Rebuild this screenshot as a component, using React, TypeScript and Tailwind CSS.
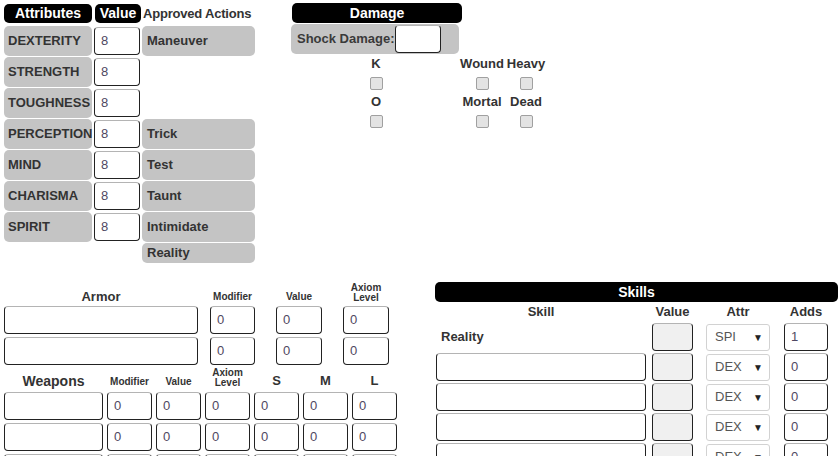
import React from "react";

const attributes = [
    {name: "DEXTERITY", action: "Maneuver"},
    {name: "STRENGTH", action: ""},
    {name: "TOUGHNESS", action: ""},
    {name: "PERCEPTION", action: "Trick"},
    {name: "MIND", action: "Test"},
    {name: "CHARISMA", action: "Taunt"},
    {name: "SPIRIT", action: "Intimidate"},
];

// shared look of the text boxes
const box = "border border-[#222] border-t-[#b4b4b4] rounded-[4px] text-[13px] text-[#4f4862] pl-[6px] flex items-center";

function Field({w, value = "", gray = false}: {w: string; value?: string; gray?: boolean}) {
    return (
        <div className={`${box} ${w} h-[28px] ${gray ? "bg-[#f0f0f0]" : "bg-white"}`}>{value}</div>
    );
}

function Check() {
    return <div className="w-[13px] h-[13px] rounded-[2px] border border-[#a0a0a0] bg-[#e3e3e3]"></div>;
}

function Select({value}: {value: string}) {
    return (
        <div className="w-[64px] h-[27px] border border-[#d2d2d2] rounded-[3px] bg-white flex items-center justify-between pl-[8px] pr-[6px] text-[13px] text-[#555]">
            <span>{value}</span>
            <span className="text-[10px] text-[#222]">▼</span>
        </div>
    );
}

export default function App() {
    return (
        <div className="w-[838px] h-[456px] overflow-hidden bg-white text-[#333] font-['Liberation_Sans',Arial,sans-serif]">
            {/* top part: attributes and damage */}
            <div className="flex pt-[4px] pl-[4px]">
                <div className="w-[251px]">
                    <div className="flex items-center h-[19px] gap-[3px]">
                        <div className="w-[88px] h-[19px] bg-black text-white rounded-[5px] font-bold text-[14px] flex items-center justify-center">Attributes</div>
                        <div className="w-[46px] h-[19px] bg-black text-white rounded-[5px] font-bold text-[14px] flex items-center justify-center">Value</div>
                        <div className="font-bold text-[13px] whitespace-nowrap -ml-[1px] tracking-[-0.2px]">Approved Actions</div>
                    </div>
                    <div className="flex flex-col gap-[1px] mt-[3px]">
                        {attributes.map((a) => (
                            <div key={a.name} className="flex items-center h-[30px] gap-[2px]">
                                <div className="w-[88px] h-[30px] bg-[#c4c4c4] rounded-[5px] flex items-center pl-[4px] font-bold text-[13px]">{a.name}</div>
                                <Field w="w-[46px]" value="8" />
                                {a.action ? (
                                    <div className="w-[113px] h-[30px] bg-[#c4c4c4] rounded-[5px] flex items-center pl-[5px] font-bold text-[13px]">{a.action}</div>
                                ) : null}
                            </div>
                        ))}
                        <div className="flex">
                            <div className="ml-[138px] w-[113px] h-[20px] bg-[#c4c4c4] rounded-[5px] flex items-center pl-[5px] font-bold text-[13px]">Reality</div>
                        </div>
                    </div>
                </div>

                <div className="ml-[36px] -mt-[1px]">
                    <div className="w-[170px] h-[20px] ml-[1px] bg-black text-white rounded-[5px] font-bold text-[14px] flex items-center justify-center">Damage</div>
                    <div className="w-[168px] h-[30px] mt-[1px] bg-[#c4c4c4] rounded-[5px] flex items-center pl-[6px] font-bold text-[13px] text-[#3a3a3a]">
                        <span>Shock Damage:</span>
                        <Field w="w-[46px]" />
                    </div>
                    <div className="flex mt-[2px] text-[13px] font-bold">
                        <div className="ml-[65px] w-[40px] flex flex-col items-center">
                            <div className="h-[14px] leading-[14px] mt-[1px]">K</div>
                            <div className="mt-[6px]"><Check /></div>
                            <div className="h-[14px] leading-[14px] mt-[5px]">O</div>
                            <div className="mt-[6px]"><Check /></div>
                        </div>
                        <div className="ml-[61px] w-[50px] flex flex-col items-center">
                            <div className="h-[14px] leading-[14px] mt-[1px]">Wound</div>
                            <div className="mt-[6px]"><Check /></div>
                            <div className="h-[14px] leading-[14px] mt-[5px]">Mortal</div>
                            <div className="mt-[6px]"><Check /></div>
                        </div>
                        <div className="w-[38px] flex flex-col items-center">
                            <div className="h-[14px] leading-[14px] mt-[1px]">Heavy</div>
                            <div className="mt-[6px]"><Check /></div>
                            <div className="h-[14px] leading-[14px] mt-[5px]">Dead</div>
                            <div className="mt-[6px]"><Check /></div>
                        </div>
                    </div>
                </div>
            </div>

            {/* bottom part: armor, weapons and skills */}
            <div className="flex mt-[19px] pl-[4px]">
                <div className="w-[400px] pt-[3px]">
                    <div className="flex items-end h-[19px] font-bold">
                        <div className="w-[194px] text-center text-[13px] leading-[15px]">Armor</div>
                        <div className="w-[45px] ml-[12px] text-center text-[10px] leading-[15px]">Modifier</div>
                        <div className="w-[46px] ml-[21px] text-center text-[10px] leading-[15px]">Value</div>
                        <div className="w-[46px] ml-[21px] text-center text-[10px] leading-[10px] pb-[1px]">Axiom<br />Level</div>
                    </div>
                    <div className="flex flex-col gap-[3px] mt-[2px]">
                        {[0, 1].map((r) => (
                            <div key={r} className="flex">
                                <Field w="w-[194px]" />
                                <div className="ml-[12px]"><Field w="w-[45px]" value="0" /></div>
                                <div className="ml-[21px]"><Field w="w-[46px]" value="0" /></div>
                                <div className="ml-[21px]"><Field w="w-[46px]" value="0" /></div>
                            </div>
                        ))}
                    </div>
                    <div className="flex items-end h-[19px] mt-[5px] font-bold gap-[4px]">
                        <div className="w-[99px] text-center text-[14px] leading-[16px]">Weapons</div>
                        <div className="w-[45px] text-center text-[10px] leading-[15px]">Modifier</div>
                        <div className="w-[45px] text-center text-[10px] leading-[15px]">Value</div>
                        <div className="w-[45px] text-center text-[10px] leading-[10px] pb-[1px]">Axiom<br />Level</div>
                        <div className="w-[45px] text-center text-[13px] leading-[16px]">S</div>
                        <div className="w-[45px] text-center text-[13px] leading-[16px]">M</div>
                        <div className="w-[45px] text-center text-[13px] leading-[16px]">L</div>
                    </div>
                    <div className="flex flex-col gap-[3px] mt-[3px]">
                        {[0, 1, 2].map((r) => (
                            <div key={r} className="flex gap-[4px]">
                                <Field w="w-[99px]" />
                                {[0, 1, 2, 3, 4, 5].map((c) => (
                                    <Field key={c} w="w-[45px]" value="0" />
                                ))}
                            </div>
                        ))}
                    </div>
                </div>

                <div className="ml-[31px]">
                    <div className="w-[403px] h-[20px] bg-black text-white rounded-[5px] font-bold text-[14px] flex items-center justify-center">Skills</div>
                    <div className="flex font-bold text-[13px] h-[20px] items-center">
                        <div className="w-[210px] ml-[1px] text-center">Skill</div>
                        <div className="w-[41px] ml-[6px] text-center">Value</div>
                        <div className="w-[64px] ml-[13px] text-center">Attr</div>
                        <div className="w-[44px] ml-[14px] text-center">Adds</div>
                    </div>
                    <div className="flex flex-col gap-[2px] mt-[1px]">
                        <div className="flex items-center">
                            <div className="w-[210px] ml-[1px] pl-[5px] font-bold text-[13px]">Reality</div>
                            <div className="ml-[6px]"><Field w="w-[41px]" gray /></div>
                            <div className="ml-[13px]"><Select value="SPI" /></div>
                            <div className="ml-[14px]"><Field w="w-[44px]" value="1" /></div>
                        </div>
                        {[0, 1, 2, 3].map((r) => (
                            <div key={r} className="flex items-center">
                                <div className="ml-[1px]"><Field w="w-[210px]" /></div>
                                <div className="ml-[6px]"><Field w="w-[41px]" gray /></div>
                                <div className="ml-[13px]"><Select value="DEX" /></div>
                                <div className="ml-[14px]"><Field w="w-[44px]" value="0" /></div>
                            </div>
                        ))}
                    </div>
                </div>
            </div>
        </div>
    );
}
